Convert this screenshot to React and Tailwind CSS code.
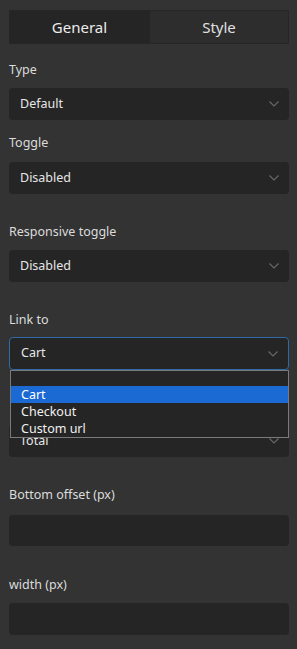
import React from "react";

function Chevron() {
  return (
    <svg width="10" height="6" viewBox="0 0 10 6" className="shrink-0">
      <path d="M0.5 0.5 L5 5 L9.5 0.5" fill="none" stroke="#6a6a6a" strokeWidth="1.1" />
    </svg>
  );
}

function Select({ value, active }) {
  return (
    <div
      className={
        "flex items-center justify-between rounded-[4px] bg-[#252525] pl-[11px] pr-[10px] text-[12.5px] text-[#e6e6e6] " +
        (active ? "h-[33px] border border-[#2f6aa6] pl-[10px] pr-[9px]" : "h-[32px]")
      }
    >
      <span>{value}</span>
      <Chevron />
    </div>
  );
}

function Label({ children, className }) {
  return (
    <div className={"h-[17px] text-[12.5px] leading-[17px] text-[#dcdcdc] " + className}>{children}</div>
  );
}

export default function App() {
  return (
    <div
      className="min-h-[649px] w-[297px] bg-[#333333] pl-[9px] pr-[8px] pt-[10px]"
      style={{ fontFamily: '"Noto Sans", "Open Sans", sans-serif' }}
    >
      <div className="flex h-[34px] border border-[#262626] text-[15px]">
        <div className="flex w-[139px] items-center justify-center bg-[#252525] text-[#ececec]">General</div>
        <div className="flex flex-1 items-center justify-center border-l border-[#262626] bg-[#2d2d2d] text-[#e0e0e0]">
          Style
        </div>
      </div>

      <Label className="mt-[17px]">Type</Label>
      <div className="mt-[10px]">
        <Select value="Default" />
      </div>

      <Label className="mt-[14px]">Toggle</Label>
      <div className="mt-[11px]">
        <Select value="Disabled" />
      </div>

      <Label className="mt-[29px]">Responsive toggle</Label>
      <div className="mt-[10px]">
        <Select value="Disabled" />
      </div>

      <Label className="mt-[29px]">Link to</Label>
      <div className="relative z-10 mt-[9px]">
        <Select value="Cart" active />
        <div className="absolute left-[1px] right-0 top-[33px] border border-[#7a7a7a] bg-[#252525] text-[12.5px] leading-[17px] text-[#f0f0f0]">
          <div className="h-[15px]" />
          <div className="h-[17px] bg-[#1b69d3] pl-[10px] text-white">Cart</div>
          <div className="h-[17px] pl-[10px]">Checkout</div>
          <div className="h-[17px] pl-[10px]">Custom url</div>
        </div>
      </div>

      <div className="mt-[38px] h-[17px]" />
      <div className="mt-[0px]">
        <Select value="Total" />
      </div>

      <Label className="mt-[29px]">Bottom offset (px)</Label>
      <div className="mt-[12px] h-[31px] rounded-[4px] bg-[#252525]" />

      <Label className="mt-[30px]">width (px)</Label>
      <div className="mt-[10px] h-[32px] rounded-[4px] bg-[#252525]" />
    </div>
  );
}
